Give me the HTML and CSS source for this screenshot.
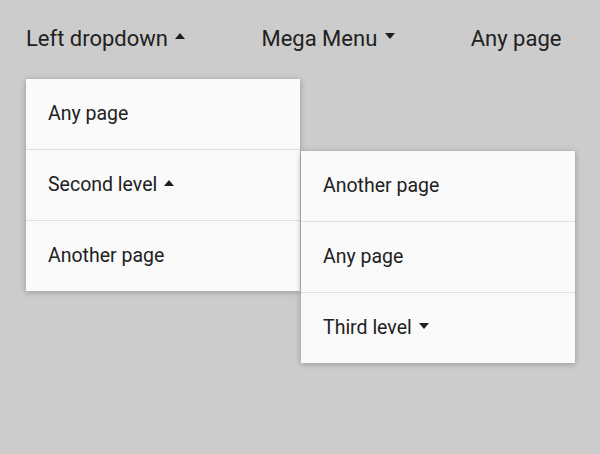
FILE: index.html
```html
<!DOCTYPE html>
<html lang="en">
  <head>
    <meta charset="UTF-8" />
    <meta name="viewport" content="width=device-width, initial-scale=1.0" />
    <title>Dropdown Menu</title>
    <link rel="stylesheet" href="styles.css">
  </head>
  <body>
    <nav class="navbar">
      <div class="nav-item open">
        <a href="#">Left dropdown <span class="caret up"></span></a>
        <ul class="dropdown">
          <li><a href="#">Any page</a></li>
          <li class="sub open">
            <a href="#">Second level <span class="caret up"></span></a>
            <ul class="dropdown submenu">
              <li><a href="#">Another page</a></li>
              <li><a href="#">Any page</a></li>
              <li><a href="#">Third level <span class="caret"></span></a></li>
            </ul>
          </li>
          <li><a href="#">Another page</a></li>
        </ul>
      </div>
      <div class="nav-item">
        <a href="#">Mega Menu <span class="caret"></span></a>
      </div>
      <div class="nav-item">
        <a href="#">Any page</a>
      </div>
    </nav>
  </body>
</html>
```

FILE: styles.css
```css
html,
body {
  height: 100%;
}

body {
  margin: 0;
  padding: 0;
  min-height: 454px;
  font-family: Roboto, "Noto Sans", sans-serif;
  background-color: #cccccc;
  color: #212121;
}

a {
  color: inherit;
  text-decoration: none;
}

.navbar {
  display: flex;
  padding: 25px 0 0 26px;
  gap: 76px;
}

.nav-item {
  position: relative;
  flex-shrink: 0;
  white-space: nowrap;
  font-size: 22px;
  line-height: 27px;
}

.caret {
  display: inline-block;
  width: 0;
  height: 0;
  margin-left: 2px;
  vertical-align: middle;
  border-left: 5.5px solid transparent;
  border-right: 5.5px solid transparent;
  border-top: 6px solid #1e1e1e;
  position: relative;
  top: -4px;
}

.caret.up {
  border-top: none;
  border-bottom: 6px solid #1e1e1e;
}

.dropdown {
  position: absolute;
  top: 54px;
  left: 0;
  width: 274px;
  margin: 0;
  padding: 0;
  list-style: none;
  background-color: #fafafa;
  box-shadow: 0 1px 6px rgba(0, 0, 0, 0.28);
  z-index: 10;
}

.dropdown li {
  position: relative;
  border-bottom: 1px solid #e0e0e0;
}

.dropdown li:last-child {
  border-bottom: none;
}

.dropdown li a {
  display: block;
  padding: 23px 22px;
  font-size: 19.5px;
  line-height: 24px;
}

.dropdown .caret {
  top: -2.5px;
}

.submenu {
  top: 1px;
  left: calc(100% + 1px);
  z-index: 20;
}
```
